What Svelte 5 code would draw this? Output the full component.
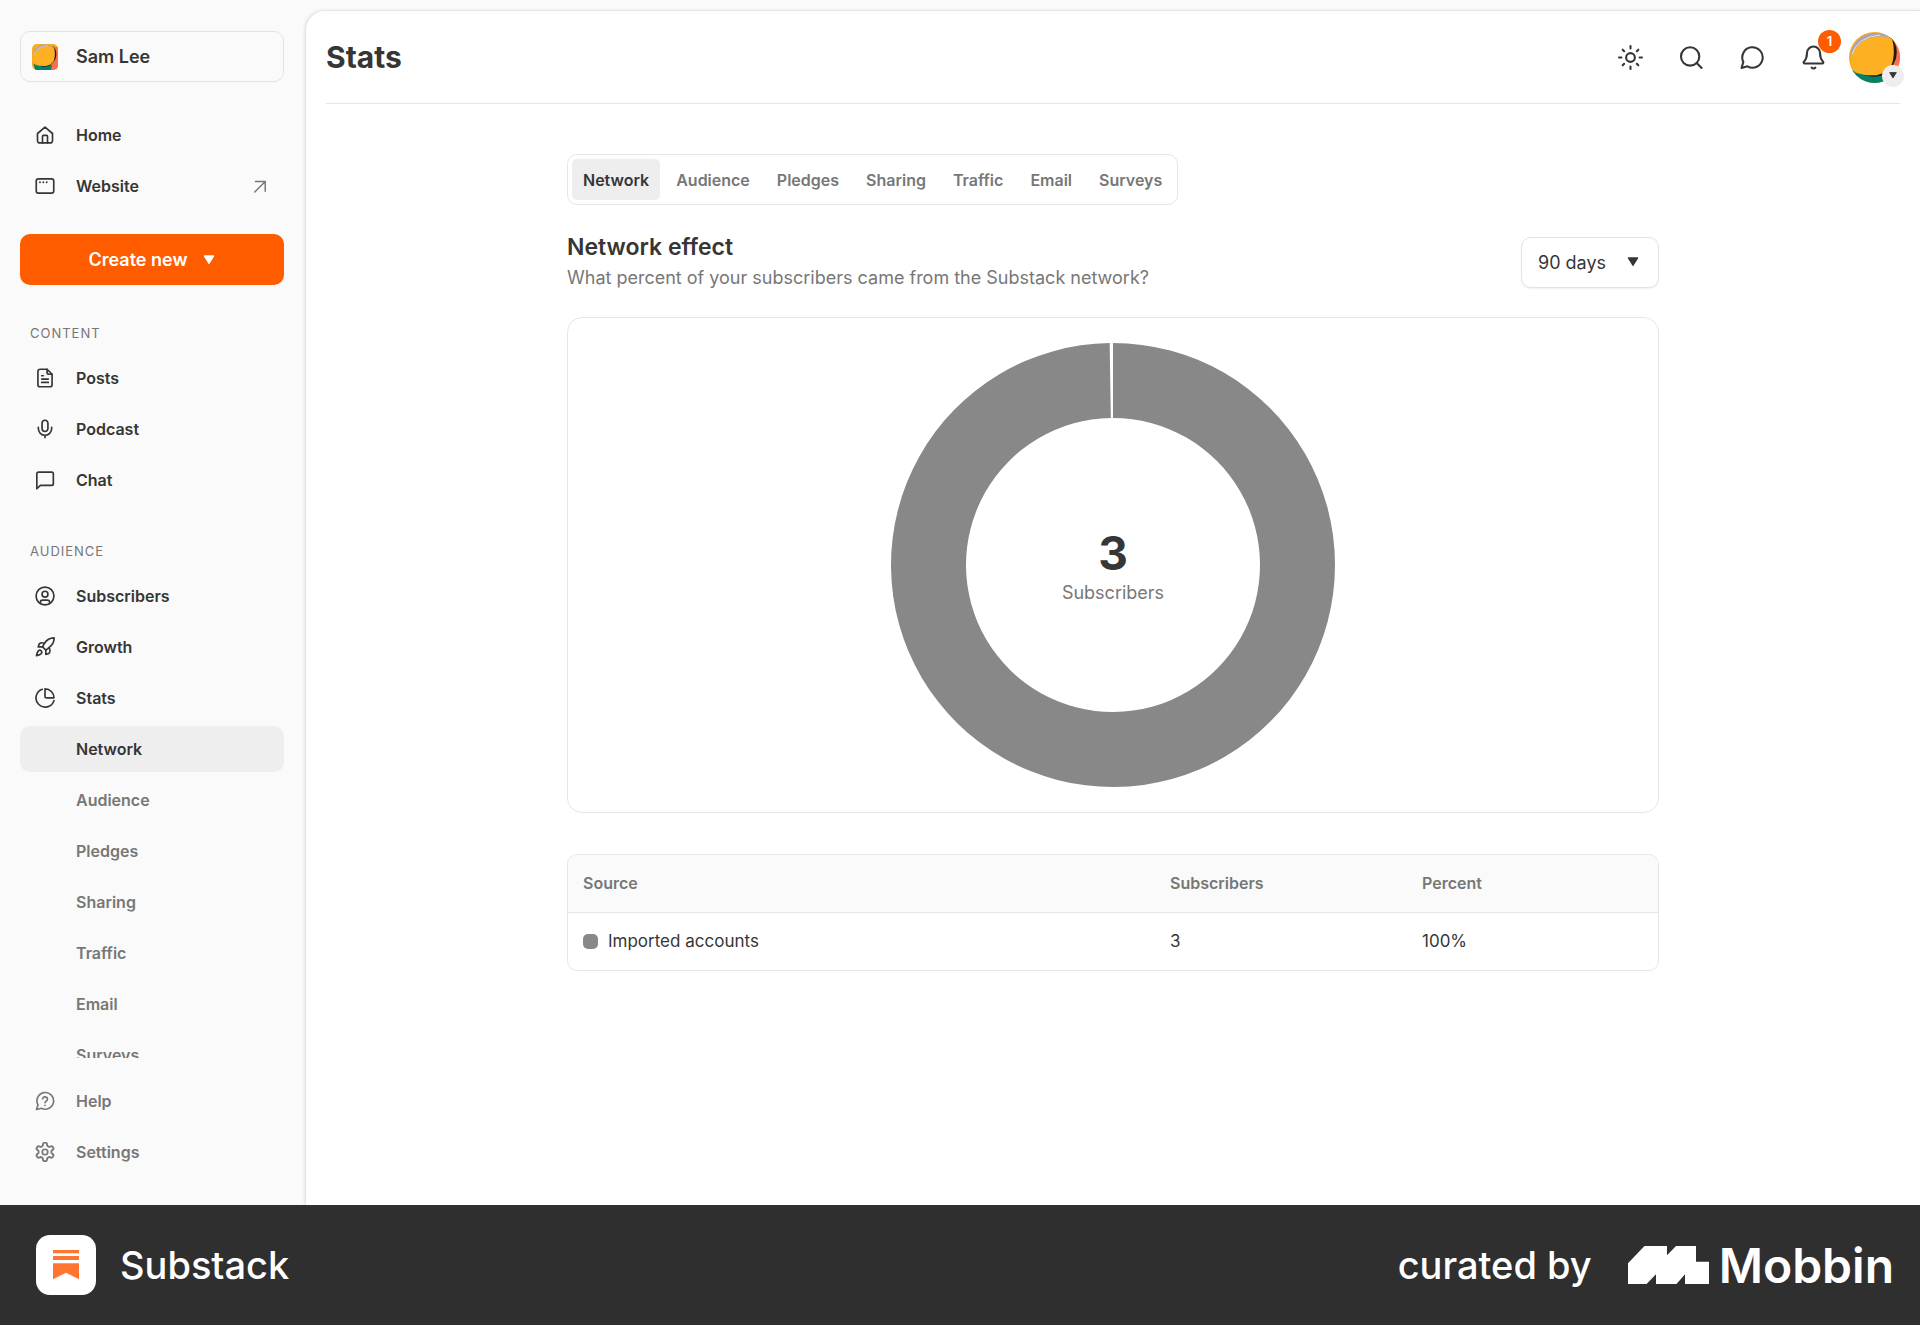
<script lang="ts">
	type NavItem = { label: string; icon?: string; external?: boolean };

	const icons: Record<string, string> = {
		home: '<path d="M3 10.2 12 2.5l9 7.7V19a2.5 2.5 0 0 1-2.5 2.5h-13A2.5 2.5 0 0 1 3 19z"/><path d="M9 21.500v-8a1 1 0 0 1 1-1h4a1 1 0 0 1 1 1v8"/>',
		website: '<rect x="1.500" y="3.500" width="21" height="17" rx="2.500"/><path d="M6 7.500h.01M10 7.500h.01M14 7.500h.01" stroke-width="2.200"/>',
		posts: '<path d="M14.500 1.500H6A2.500 2.500 0 0 0 3.500 4v16A2.500 2.500 0 0 0 6 22.500h12a2.500 2.500 0 0 0 2.500-2.500V7.500z"/><path d="M14.500 1.500v4a2 2 0 0 0 2 2h4M8 9.300h2M8 13.300h8M8 17.300h8"/>',
		podcast: '<path d="M12 1.500a3.500 3.500 0 0 0-3.500 3.500v6.500a3.500 3.500 0 0 0 7 0V5A3.500 3.500 0 0 0 12 1.500z"/><path d="M20 10v1.500a8 8 0 0 1-16 0V10M12 19.500v3"/>',
		chat: '<path d="M22 16.500a2 2 0 0 1-2 2H6.500L2.200 22.500V4.500a2 2 0 0 1 2-2H20a2 2 0 0 1 2 2z"/>',
		subscribers: '<circle cx="12" cy="12" r="10.700"/><circle cx="12" cy="9.800" r="3.500"/><path d="M6.500 20.800v-1.300A2.500 2.500 0 0 1 9 17h6a2.500 2.500 0 0 1 2.500 2.500v1.300"/>',
		growth: '<path d="M4.200 16.500c-1.700 1.400-2.400 5.800-2.400 5.800s4.400-.7 5.800-2.400c.8-.9.800-2.400-.1-3.300a2.400 2.400 0 0 0-3.300-.1z"/><path d="m13 15.800-3.900-3.900a24 24 0 0 1 2.200-4.300A13.800 13.800 0 0 1 23 1c0 3-.9 8.200-6.600 12.100a25 25 0 0 1-3.400 2.700z"/><path d="M9.100 11.900H3.900s.6-3.300 2.100-4.400c1.800-1.200 5.500 0 5.500 0M13 15.800V21s3.400-.6 4.400-2.100c1.200-1.900 0-5.500 0-5.500"/>',
		stats: '<path d="M22.700 15.200A11 11 0 1 1 8.700 1.500"/><path d="M22.800 11.800A10.800 10.800 0 0 0 12 1v8.800a2 2 0 0 0 2 2z"/>',
		help: '<path d="M1.800 22.200 3.600 16.700A10 10 0 1 1 7.700 20.700z"/><path d="M9.200 9.200a2.900 2.900 0 0 1 5.700.9c0 2-2.900 2.600-2.900 4M12 17.300h.01"/>',
		settings: '<path d="M12.200 2h-.4a2 2 0 0 0-2 2v.2a2 2 0 0 1-1 1.700l-.4.300a2 2 0 0 1-2 0l-.2-.1a2 2 0 0 0-2.700.7l-.2.400a2 2 0 0 0 .7 2.700l.2.100a2 2 0 0 1 1 1.700v.5a2 2 0 0 1-1 1.700l-.2.100a2 2 0 0 0-.7 2.700l.2.400a2 2 0 0 0 2.700.7l.2-.1a2 2 0 0 1 2 0l.4.300a2 2 0 0 1 1 1.700v.2a2 2 0 0 0 2 2h.4a2 2 0 0 0 2-2v-.2a2 2 0 0 1 1-1.700l.4-.3a2 2 0 0 1 2 0l.2.100a2 2 0 0 0 2.700-.7l.2-.4a2 2 0 0 0-.7-2.700l-.2-.1a2 2 0 0 1-1-1.700v-.5a2 2 0 0 1 1-1.700l.2-.1a2 2 0 0 0 .7-2.700l-.2-.4a2 2 0 0 0-2.700-.7l-.2.100a2 2 0 0 1-2 0l-.4-.3a2 2 0 0 1-1-1.700V4a2 2 0 0 0-2-2z" transform="translate(12 12) scale(1.120) translate(-12 -12)"/><circle cx="12" cy="12" r="3.300"/>',
		arrow: '<path d="M6 6h13v13M19 6 5 20"/>',
		sun: '<circle cx="12" cy="12" r="4.200"/><path d="M12 1v2.300M12 20.700V23M1 12h2.300M20.700 12H23M4.500 4.500 5.900 5.900M18.100 18.100l1.400 1.400M4.500 19.500l1.400-1.400M18.100 5.900l1.400-1.400"/>',
		search: '<circle cx="10.700" cy="11" r="8.800"/><path d="m17.200 17.500 4.500 4.500"/>',
		message: '<path d="M1.500 22 3.200 16.300A9.800 9.800 0 1 1 7.200 20.500z"/>',
		bell: '<path d="M12 1.500a6.300 6.300 0 0 0-6.300 6.300c0 5.500-1.500 6.700-2.900 8.200-.6.700-.2 1.700.7 1.700h17c.9 0 1.300-1 .7-1.700-1.400-1.500-2.900-2.700-2.900-8.200A6.300 6.300 0 0 0 12 1.500z"/><path d="M10.200 21.800c.8 1.100 2.800 1.100 3.600 0"/>',
	};

	const topNav: NavItem[] = [
		{ label: 'Home', icon: 'home' },
		{ label: 'Website', icon: 'website', external: true },
	];

	const contentNav: NavItem[] = [
		{ label: 'Posts', icon: 'posts' },
		{ label: 'Podcast', icon: 'podcast' },
		{ label: 'Chat', icon: 'chat' },
	];

	const audienceNav: NavItem[] = [
		{ label: 'Subscribers', icon: 'subscribers' },
		{ label: 'Growth', icon: 'growth' },
		{ label: 'Stats', icon: 'stats' },
	];

	const bottomNav: NavItem[] = [
		{ label: 'Help', icon: 'help' },
		{ label: 'Settings', icon: 'settings' },
	];

	const actions = [
		{ label: 'Theme', icon: 'sun', count: 0 },
		{ label: 'Search', icon: 'search', count: 0 },
		{ label: 'Messages', icon: 'message', count: 0 },
		{ label: 'Notifications', icon: 'bell', count: 1 },
	];

	const tabs = ['Network', 'Audience', 'Pledges', 'Sharing', 'Traffic', 'Email', 'Surveys'];
	let activeTab = $state('Network');

	const sources = [{ name: 'Imported accounts', subscribers: 3, percent: 100, color: '#888888' }];
	const total = sources.reduce((sum, s) => sum + s.subscribers, 0);

	const outer = 222;
	const inner = 147;
	const padAngle = 0.015;

	function point(radius: number, angle: number): string {
		return `${outer + radius * Math.sin(angle)} ${outer - radius * Math.cos(angle)}`;
	}

	function arc(start: number, end: number): string {
		const large = end - start > Math.PI ? 1 : 0;
		return `M${point(outer, start)} A${outer} ${outer} 0 ${large} 1 ${point(outer, end)} L${point(inner, end)} A${inner} ${inner} 0 ${large} 0 ${point(inner, start)} Z`;
	}

	let start = 0;
	const slices = sources.map((source) => {
		const end = start + (source.subscribers / total) * Math.PI * 2;
		const d = arc(start, end - padAngle);
		start = end;
		return { d, color: source.color };
	});
</script>

{#snippet icon(name: string)}
	<svg class="icon" viewBox="0 0 24 24" aria-hidden="true">{@html icons[name]}</svg>
{/snippet}

{#snippet caret()}
	<svg class="caret" viewBox="0 0 12 10" aria-hidden="true">
		<path d="M2 1.500h8L6 8z" />
	</svg>
{/snippet}

{#snippet avatar()}
	<svg class="avatar" viewBox="0 0 52 52" aria-hidden="true">
		<rect width="52" height="52" fill="#fbab1e" />
		<path d="M42 6h10v46H32z" fill="#fa6f52" />
		<path d="M3 39Q20 47 40 42L38 52H6z" fill="#07806a" />
		<path d="M42 4Q51 14 48 27Q44 38 34 44Q26 47 16 44L30 20z" fill="#231a14" />
		<path d="M1 24Q5 3 26 1Q36 0 42 6L20 14z" fill="#a3a3c4" />
		<path d="M3 24Q8 8 26 5Q36 3 44 7Q48 22 43 35Q38 42 28 44Q16 45 6 41Q2 34 3 24z" fill="#fdb022" />
		<path d="M3 23Q8 5 32 3" fill="none" stroke="#f4e3c4" />
	</svg>
{/snippet}

{#snippet navList(items: NavItem[])}
	<ul>
		{#each items as item}
			<li>
				<a class="nav-item" href="#{item.label.toLowerCase()}">
					{@render icon(item.icon ?? '')}
					<span>{item.label}</span>
					{#if item.external}
						<span class="external">{@render icon('arrow')}</span>
					{/if}
				</a>
			</li>
		{/each}
	</ul>
{/snippet}

<div class="page">
	<div class="app">
		<aside class="sidebar">
			<nav class="scroll">
				<button class="profile" type="button">
					{@render avatar()}
					<span>Sam Lee</span>
				</button>

				{@render navList(topNav)}

				<button class="create" type="button">
					Create new
					{@render caret()}
				</button>

				<h2 class="section">Content</h2>
				{@render navList(contentNav)}

				<h2 class="section">Audience</h2>
				{@render navList(audienceNav)}
				<ul class="sub-nav">
					{#each tabs as tab}
						<li>
							<a class="nav-item sub" class:active={tab === activeTab} href="#stats-{tab.toLowerCase()}">{tab}</a>
						</li>
					{/each}
				</ul>
			</nav>

			<nav class="bottom">
				{@render navList(bottomNav)}
			</nav>
		</aside>

		<main>
			<header>
				<h1>Stats</h1>
				<div class="actions">
					{#each actions as action}
						<button class="action" type="button" aria-label={action.label}>
							{@render icon(action.icon)}
							{#if action.count}
								<span class="badge">{action.count}</span>
							{/if}
						</button>
					{/each}
					<button class="account" type="button" aria-label="Account">
						{@render avatar()}
						<span class="account-caret">{@render caret()}</span>
					</button>
				</div>
			</header>

			<div class="content">
				<div class="tabs" role="tablist">
					{#each tabs as tab}
						<button
							type="button"
							role="tab"
							class="tab"
							class:active={tab === activeTab}
							aria-selected={tab === activeTab}
							onclick={() => (activeTab = tab)}>{tab}</button
						>
					{/each}
				</div>

				<div class="intro">
					<div>
						<h2>Network effect</h2>
						<p>What percent of your subscribers came from the Substack network?</p>
					</div>
					<div class="select">
						<select aria-label="Time range">
							<option>90 days</option>
							<option>30 days</option>
							<option>All time</option>
						</select>
						{@render caret()}
					</div>
				</div>

				<section class="chart">
					<svg class="donut" viewBox="0 0 444 444" role="img" aria-label="Subscribers by source">
						{#each slices as slice}
							<path d={slice.d} fill={slice.color} />
						{/each}
					</svg>
					<div class="total">
						<strong>{total}</strong>
						<span>Subscribers</span>
					</div>
				</section>

				<div class="table-card">
					<table>
						<thead>
							<tr>
								<th class="source">Source</th>
								<th class="count">Subscribers</th>
								<th>Percent</th>
							</tr>
						</thead>
						<tbody>
							{#each sources as source}
								<tr>
									<td>
										<span class="source-name">
											<span class="swatch" style="background: {source.color}"></span>
											{source.name}
										</span>
									</td>
									<td>{source.subscribers}</td>
									<td>{source.percent}%</td>
								</tr>
							{/each}
						</tbody>
					</table>
				</div>
			</div>
		</main>
	</div>

	<footer>
		<div class="brand">
			<svg class="brand-logo" viewBox="0 0 60 60" aria-hidden="true">
				<rect width="60" height="60" rx="14" fill="#ffffff" />
				<path d="M17 15h26v3.300H17zM17 21h26v4H17zM17 28.300h26v16L30 37.800l-13 6.500z" fill="#ff7430" />
			</svg>
			<span>Substack</span>
		</div>
		<div class="credit">
			<span>curated by</span>
			<svg class="mobbin-mark" viewBox="0 0 81 38" aria-hidden="true">
				<path d="M0 17.300 16.500 0H39v9.300L48 0h20v15.700h13V38H57v-9.700L48.500 38H28v-9.700L18.600 38H0z" fill="#ffffff" />
			</svg>
			<span class="mobbin">Mobbin</span>
		</div>
	</footer>
</div>

<style>
	:global(body) {
		margin: 0;
		background: #fafafa;
	}

	.page {
		height: 100vh;
		display: flex;
		flex-direction: column;
		font-family: Inter, 'Liberation Sans', sans-serif;
		font-size: 16px;
		color: #363636;
	}

	.page * {
		box-sizing: border-box;
	}

	h1,
	h2,
	p,
	ul {
		margin: 0;
		padding: 0;
	}

	ul {
		list-style: none;
		display: flex;
		flex-direction: column;
		gap: 5px;
	}

	button,
	select {
		font: inherit;
		color: inherit;
		cursor: pointer;
	}

	.icon {
		width: 20px;
		height: 20px;
		flex: none;
		fill: none;
		stroke: currentColor;
		stroke-width: 2;
		stroke-linecap: round;
		stroke-linejoin: round;
	}

	.caret {
		width: 14px;
		height: 12px;
		flex: none;
		fill: currentColor;
		stroke: currentColor;
		stroke-linejoin: round;
	}

	.app {
		flex: 1;
		min-height: 0;
		display: flex;
	}

	.sidebar {
		width: 305px;
		flex: none;
		display: flex;
		flex-direction: column;
		padding: 31px 21px 30px 20px;
	}

	.scroll {
		flex: 1;
		min-height: 0;
		overflow: hidden;
	}

	.profile {
		width: 100%;
		height: 51px;
		margin-bottom: 30px;
		padding: 0 11px;
		display: flex;
		align-items: center;
		gap: 18px;
		background: transparent;
		border: 1px solid #e3e3e3;
		border-radius: 10px;
		font-size: 18px;
		font-weight: 600;
	}

	.profile .avatar {
		width: 26px;
		height: 26px;
		border-radius: 5px;
	}

	.nav-item {
		height: 46px;
		padding: 0 15px;
		display: flex;
		align-items: center;
		gap: 21px;
		border-radius: 10px;
		color: #363636;
		font-weight: 600;
		text-decoration: none;
	}

	.external {
		margin-left: auto;
		display: flex;
		color: #777777;
	}

	.external .icon {
		width: 18px;
		height: 18px;
	}

	.create {
		width: 100%;
		height: 51px;
		margin-top: 25px;
		display: flex;
		align-items: center;
		justify-content: center;
		gap: 14px;
		background: #ff5c00;
		border: 0;
		border-radius: 10px;
		color: #ffffff;
		font-size: 18px;
		font-weight: 600;
	}

	.section {
		margin: 37px 0 11px 10px;
		color: #777777;
		font-size: 13px;
		font-weight: 400;
		line-height: 22px;
		letter-spacing: 1px;
		text-transform: uppercase;
	}

	.sub-nav {
		margin-top: 5px;
	}

	.sub {
		padding-left: 56px;
		color: #777777;
	}

	.sub.active {
		background: #eeeeee;
		color: #363636;
	}

	.bottom {
		padding-top: 20px;
	}

	.bottom .nav-item {
		color: #777777;
	}

	main {
		flex: 1;
		min-width: 0;
		margin-top: 10px;
		padding: 0 20px;
		background: #ffffff;
		border-top: 1px solid #e6e6e6;
		border-left: 1px solid #e6e6e6;
		border-top-left-radius: 20px;
		box-shadow: -1px 0 3px rgb(0 0 0 / 8%);
	}

	header {
		height: 93px;
		display: flex;
		align-items: center;
		justify-content: space-between;
		border-bottom: 1px solid #e6e6e6;
	}

	h1 {
		font-size: 30px;
		font-weight: 700;
	}

	.actions {
		display: flex;
		gap: 10px;
	}

	.action,
	.account {
		position: relative;
		width: 51px;
		height: 51px;
		padding: 0;
		display: grid;
		place-items: center;
		background: transparent;
		border: 0;
	}

	.action .icon {
		width: 25px;
		height: 25px;
	}

	.badge {
		position: absolute;
		top: -2px;
		right: -2px;
		width: 23px;
		height: 23px;
		border-radius: 50%;
		background: #ff5c00;
		color: #ffffff;
		font-size: 13px;
		font-weight: 600;
		line-height: 23px;
	}

	.account .avatar {
		width: 51px;
		height: 51px;
		border-radius: 50%;
	}

	.account-caret {
		position: absolute;
		right: -4px;
		bottom: -4px;
		width: 22px;
		height: 22px;
		display: grid;
		place-items: center;
		border-radius: 50%;
		background: #eeeeee;
	}

	.account-caret .caret {
		width: 10px;
		height: 9px;
	}

	.content {
		max-width: 1092px;
		margin: 0 auto;
		padding: 50px 0;
	}

	.tabs {
		width: max-content;
		padding: 4px;
		display: flex;
		gap: 5px;
		border: 1px solid #e6e6e6;
		border-radius: 10px;
	}

	.tab {
		height: 41px;
		padding: 0 11px;
		background: transparent;
		border: 0;
		border-radius: 5px;
		color: #777777;
		font-weight: 600;
	}

	.tab.active {
		background: #eeeeee;
		color: #363636;
	}

	.intro {
		margin: 29px 0 27px;
		display: flex;
		align-items: center;
		justify-content: space-between;
	}

	.intro h2 {
		font-size: 23px;
		font-weight: 600;
		line-height: 26px;
	}

	.intro p {
		margin-top: 6px;
		color: #777777;
		font-size: 18px;
		line-height: 24px;
	}

	.select {
		display: grid;
		align-items: center;
	}

	.select > :global(*) {
		grid-area: 1 / 1;
	}

	.select .caret {
		margin-right: 19px;
		justify-self: end;
		pointer-events: none;
	}

	select {
		width: 138px;
		height: 51px;
		padding: 0 16px;
		appearance: none;
		background: #ffffff;
		border: 1px solid #e3e3e3;
		border-radius: 10px;
		box-shadow: 0 1px 2px rgb(0 0 0 / 6%);
		font-size: 18px;
	}

	.chart {
		padding: 25px;
		display: grid;
		place-items: center;
		border: 1px solid #e6e6e6;
		border-radius: 15px;
	}

	.chart > * {
		grid-area: 1 / 1;
	}

	.donut {
		width: 444px;
		height: 444px;
	}

	.total {
		display: flex;
		flex-direction: column;
		align-items: center;
		color: #777777;
		font-size: 18px;
		line-height: 24px;
	}

	.total strong {
		color: #363636;
		font-size: 46px;
		font-weight: 700;
		line-height: 56px;
	}

	.table-card {
		margin-top: 41px;
		overflow: hidden;
		border: 1px solid #e6e6e6;
		border-radius: 10px;
	}

	table {
		width: 100%;
		table-layout: fixed;
		border-collapse: collapse;
		text-align: left;
	}

	th {
		height: 57px;
		padding: 0 15px;
		background: #fafafa;
		border-bottom: 1px solid #e6e6e6;
		color: #777777;
		font-weight: 600;
	}

	td {
		height: 58px;
		padding: 0 15px;
		font-size: 17px;
	}

	.source {
		width: 587px;
	}

	.count {
		width: 252px;
	}

	.source-name {
		display: flex;
		align-items: center;
		gap: 10px;
	}

	.swatch {
		width: 15px;
		height: 15px;
		border-radius: 5px;
	}

	footer {
		height: 120px;
		flex: none;
		padding: 0 26px 0 36px;
		display: flex;
		align-items: center;
		justify-content: space-between;
		background: #2f2f2f;
		color: #ffffff;
		font-size: 38px;
		font-weight: 500;
	}

	.brand,
	.credit {
		display: flex;
		align-items: center;
	}

	.brand {
		gap: 24px;
	}

	.brand-logo {
		width: 60px;
		height: 60px;
	}

	.mobbin-mark {
		width: 81px;
		height: 38px;
		margin: 0 10px 0 36px;
	}

	.mobbin {
		font-size: 48px;
		font-weight: 600;
	}
</style>
